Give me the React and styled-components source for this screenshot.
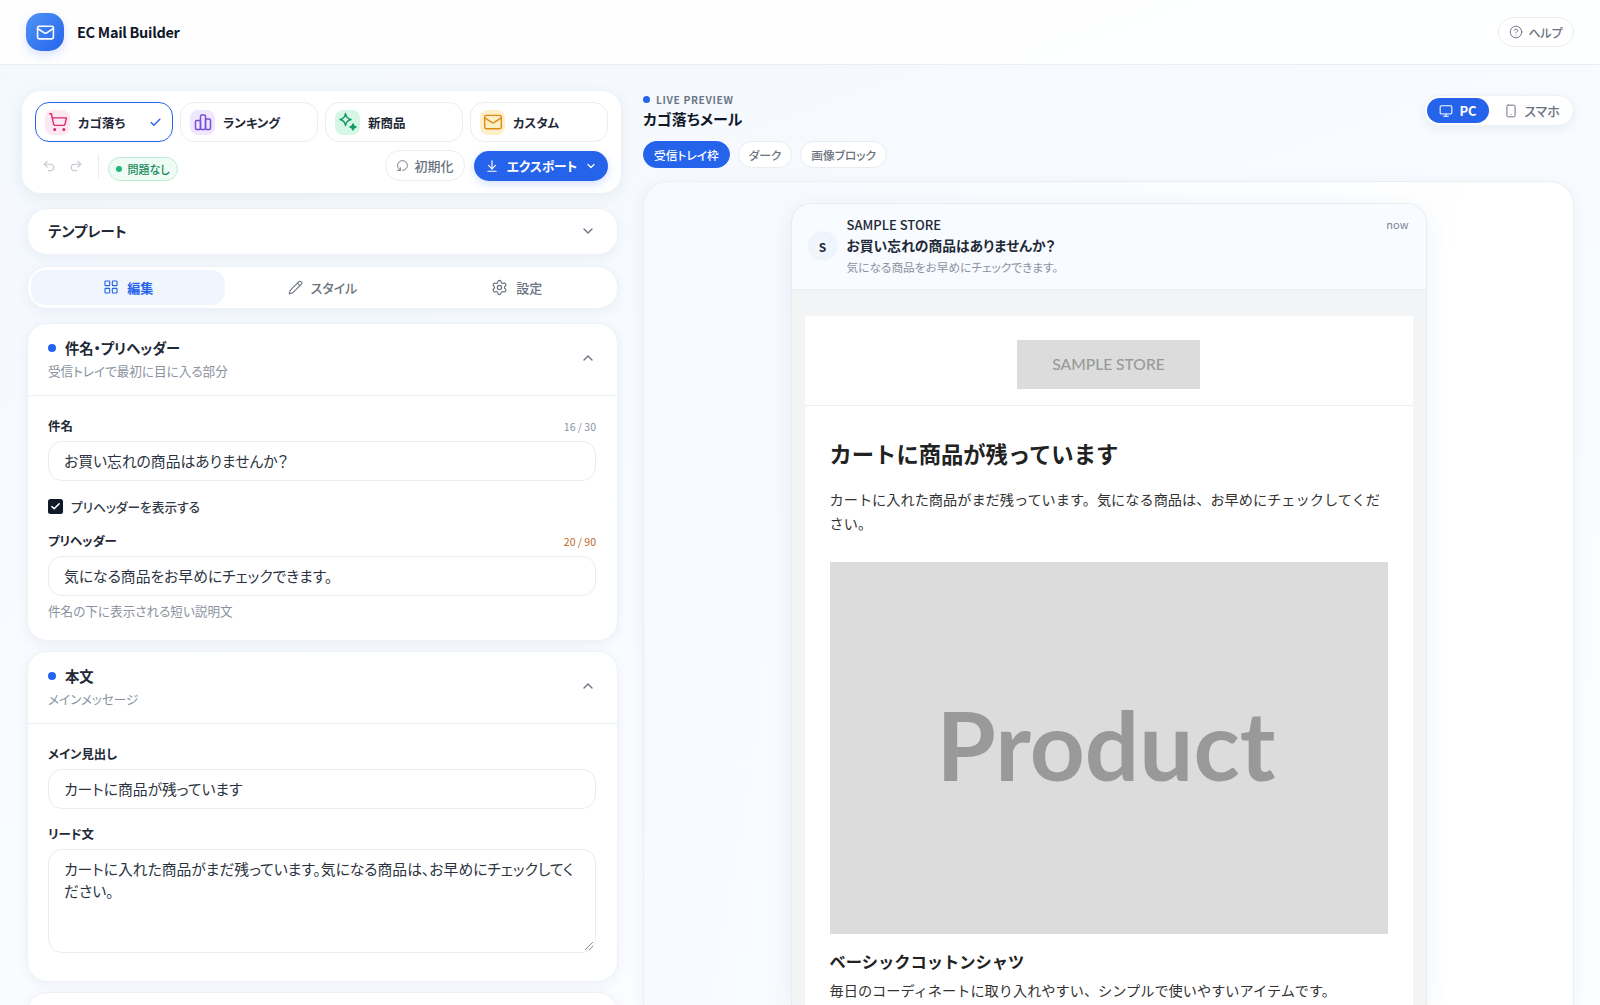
import React from "react";
import styled, { createGlobalStyle } from "styled-components";
import {
  Mail, CircleHelp, ShoppingCart, Check, Undo2, Redo2, RotateCcw, ArrowDownToLine, ChevronDown, ChevronUp,
  LayoutGrid, Pencil, Settings, Monitor, Smartphone,
} from "lucide-react";

const FONT = `"Noto Sans CJK JP", "Noto Sans", sans-serif`;

const Global = createGlobalStyle`
  * { box-sizing: border-box; }
  html, body { margin: 0; padding: 0; height: 100%; overflow: hidden; }
  body {
    font-family: ${FONT};
    font-feature-settings: "palt";
    color: #111827;
    background: linear-gradient(160deg, #f3f8fe 0%, #f8fbff 45%, #fcfdff 100%);
  }
`;

const Page = styled.div`
  height: 1005px;
  overflow: hidden;
  display: flex;
  flex-direction: column;
`;

const Header = styled.header`
  height: 65px;
  flex: none;
  display: flex;
  align-items: center;
  justify-content: space-between;
  padding: 0 26px;
  background: rgba(255, 255, 255, 0.85);
  border-bottom: 1px solid #e9eef4;
`;

const Brand = styled.div`
  display: flex;
  align-items: center;
  gap: 13px;
`;

const LogoMark = styled.div`
  width: 38px;
  height: 38px;
  border-radius: 15px;
  display: flex;
  align-items: center;
  justify-content: center;
  color: #fff;
  background: linear-gradient(135deg, #4f94f6, #2563eb);
  box-shadow: 0 4px 10px rgba(37, 99, 235, 0.18);
`;

const BrandName = styled.div`
  font-size: 14.5px;
  font-weight: 700;
  letter-spacing: -0.3px;
  padding-bottom: 2px;
  color: #111827;
`;

const HelpButton = styled.button`
  width: 76px;
  height: 30px;
  border: 1px solid #e8ecf2;
  border-radius: 15px;
  background: #fff;
  display: flex;
  align-items: center;
  justify-content: center;
  gap: 5px;
  color: #6b7280;
  font: 500 12px ${FONT};
  font-feature-settings: "palt";
  padding: 0;
`;

const Body = styled.main`
  flex: 1;
  min-height: 0;
  display: flex;
  gap: 25px;
  padding: 26px 26px 0 27px;
`;

const LeftCol = styled.section`
  width: 591px;
  flex: none;
  display: flex;
  flex-direction: column;
  gap: 10px;
`;

const Toolbar = styled.div`
  flex: none;
  margin: -1px -4px 4px -6px;
  height: 104px;
  padding: 11px 13px 0 13px;
  background: #fff;
  border: 1px solid #eef1f6;
  border-radius: 20px;
  box-shadow: 0 4px 14px rgba(30, 64, 120, 0.07);
  display: flex;
  flex-direction: column;
  gap: 8px;
`;

const ModeRow = styled.div`
  display: grid;
  grid-template-columns: repeat(4, 1fr);
  gap: 7px;
`;

const ModeButton = styled.div`
  height: 40px;
  border-radius: 14px;
  border: ${(p) => (p.$active ? "1.5px solid #2563eb" : "1px solid #e9edf3")};
  background: #fff;
  display: flex;
  align-items: center;
  padding: 0 9px;
  gap: 8px;
  font-size: 12.5px;
  font-weight: 700;
  color: #1f2937;
`;

const ModeIcon = styled.div`
  width: 25px;
  height: 25px;
  border-radius: 8px;
  flex: none;
  background: ${(p) => p.$bg};
  color: ${(p) => p.$fg};
  display: flex;
  align-items: center;
  justify-content: center;
`;

const ModeCheck = styled.span`
  margin-left: auto;
  margin-right: 1px;
  display: flex;
  color: #2563eb;
`;

const ActionRow = styled.div`
  display: flex;
  align-items: center;
`;

const HistoryButton = styled.span`
  width: 27px;
  display: flex;
  justify-content: center;
  color: #c3c9d3;
`;

const Divider = styled.span`
  width: 1px;
  height: 24px;
  background: #e9edf3;
  margin: 0 9px 0 9px;
`;

const StatusBadge = styled.span`
  height: 24px;
  width: 70px;
  margin-top: 6px;
  border: 1px solid #bdeed5;
  background: #effcf5;
  border-radius: 12px;
  display: inline-flex;
  align-items: center;
  justify-content: center;
  gap: 5px;
  font-size: 11px;
  font-weight: 500;
  color: #14875a;
  &::before {
    content: "";
    width: 6px;
    height: 6px;
    border-radius: 50%;
    background: #22b573;
  }
`;

const ActionSpacer = styled.span`
  flex: 1;
`;

const ResetButton = styled.button`
  width: 80px;
  height: 31px;
  border: 1px solid #e9edf3;
  border-radius: 15px;
  background: #fff;
  color: #6b7280;
  display: flex;
  align-items: center;
  justify-content: center;
  gap: 5px;
  font: 500 13px ${FONT};
  font-feature-settings: "palt";
  padding: 0;
  margin-right: 9px;
`;

const ResetIcon = styled(RotateCcw)`
  transform: rotate(-90deg);
`;

const ExportButton = styled.button`
  width: 134px;
  height: 30px;
  border: 0;
  border-radius: 15px;
  background: #2563eb;
  color: #fff;
  display: flex;
  align-items: center;
  justify-content: center;
  gap: 8px;
  font: 700 12.7px ${FONT};
  font-feature-settings: "palt";
  padding: 0;
  box-shadow: 0 3px 8px rgba(37, 99, 235, 0.2);
`;

const Card = styled.div`
  flex: none;
  background: #fff;
  border: 1px solid #eef1f6;
  border-radius: 20px;
  box-shadow: 0 3px 12px rgba(30, 64, 120, 0.06);
`;

const TemplateCard = styled(Card)`
  height: 47px;
  margin-bottom: 1px;
  display: flex;
  align-items: center;
  justify-content: space-between;
  padding: 0 21px 2px 20px;
  font-size: 14.4px;
  font-weight: 700;
  color: #1f2937;
  svg { color: #6b7280; }
`;

const TabsCard = styled(Card)`
  height: 43px;
  padding: 3px;
  margin-bottom: 4px;
  display: grid;
  grid-template-columns: repeat(3, 1fr);
`;

const Tab = styled.div`
  border-radius: 14px;
  display: flex;
  align-items: center;
  justify-content: center;
  gap: 8px;
  padding-bottom: 1px;
  font-size: 13px;
  font-weight: ${(p) => (p.$active ? 700 : 500)};
  color: ${(p) => (p.$active ? "#2563eb" : "#6b7280")};
  background: ${(p) => (p.$active ? "#f0f6fe" : "transparent")};
`;

const FoldCard = styled(Card)`
  height: ${(p) => p.$h}px;
`;

const SectionHead = styled.div`
  height: 72px;
  padding: 14px 21px 0 20px;
  border-bottom: 1px solid #eef1f6;
  display: flex;
  justify-content: space-between;
  svg { color: #6b7280; margin-top: 12px; }
`;

const SectionTitle = styled.div`
  display: flex;
  align-items: center;
  gap: 9px;
  font-size: 14.3px;
  font-weight: 700;
  line-height: 20px;
  color: #1f2937;
  &::before {
    content: "";
    width: 8px;
    height: 8px;
    border-radius: 50%;
    background: #2563eb;
  }
`;

const SectionSub = styled.div`
  margin-top: 4px;
  font-size: 12.6px;
  line-height: 18px;
  color: #8a92a0;
`;

const SectionBody = styled.div`
  padding: 21px 21px 0 20px;
`;

const LabelRow = styled.div`
  display: flex;
  align-items: center;
  justify-content: space-between;
  height: 18px;
  margin-bottom: 6px;
  margin-top: ${(p) => p.$mt || 0}px;
`;

const Label = styled.label`
  font-size: 12.4px;
  font-weight: 700;
  color: #1f2937;
`;

const Counter = styled.span`
  font-size: 10.5px;
  color: ${(p) => (p.$warn ? "#b9691f" : "#8a92a0")};
`;

const Field = styled.div`
  height: 40px;
  border: 1px solid #e8ecf2;
  border-radius: 14px;
  background: #fff;
  padding: 0 15px 2px;
  display: flex;
  align-items: center;
  font-size: 14.8px;
  color: #2b3340;
`;

const AreaField = styled.div`
  position: relative;
  height: 104px;
  border: 1px solid #e8ecf2;
  border-radius: 14px;
  background: #fff;
  padding: 8px 15px;
  font-size: 14.8px;
  line-height: 21.5px;
  color: #2b3340;
`;

const ResizeGrip = styled.svg`
  position: absolute;
  right: 1px;
  bottom: 1px;
`;

const CheckRow = styled.div`
  display: flex;
  align-items: center;
  gap: 8px;
  margin: 17px 0 17px 0;
  height: 17px;
  font-size: 12.7px;
  font-weight: 500;
  color: #333b48;
`;

const CheckBox = styled.span`
  width: 15px;
  height: 15px;
  border-radius: 2.5px;
  background: #111a2b;
  color: #fff;
  display: flex;
  align-items: center;
  justify-content: center;
`;

const Help = styled.div`
  margin-top: 6px;
  font-size: 12.6px;
  line-height: 18px;
  color: #8a92a0;
`;

const RightCol = styled.section`
  flex: 1;
  min-width: 0;
  display: flex;
  flex-direction: column;
`;

const PreviewHead = styled.div`
  display: flex;
  justify-content: space-between;
  align-items: flex-start;
  height: 90px;
  flex: none;
`;

const Eyebrow = styled.div`
  display: flex;
  align-items: center;
  gap: 6px;
  height: 16px;
  font-size: 10.3px;
  font-weight: 700;
  letter-spacing: 0.06em;
  color: #6b7789;
  &::before {
    content: "";
    width: 7px;
    height: 7px;
    border-radius: 50%;
    background: #2563eb;
  }
`;

const PreviewTitle = styled.div`
  font-size: 15px;
  font-weight: 700;
  line-height: 24px;
  color: #111827;
`;

const PillRow = styled.div`
  display: flex;
  gap: 8px;
  margin-top: 10px;
`;

const Pill = styled.span`
  height: 27px;
  padding: 0 10px;
  border-radius: 14px;
  display: flex;
  align-items: center;
  font-size: 11.7px;
  font-weight: 500;
  background: ${(p) => (p.$active ? "#2563eb" : "#fff")};
  color: ${(p) => (p.$active ? "#fff" : "#6b7280")};
  border: 1px solid ${(p) => (p.$active ? "#2563eb" : "#e8ecf2")};
`;

const DeviceToggle = styled.div`
  margin-top: 4px;
  width: 150px;
  height: 31px;
  padding: 2px;
  background: #fff;
  border: 1px solid #eef1f6;
  border-radius: 16px;
  display: flex;
  box-shadow: 0 3px 10px rgba(30, 64, 120, 0.07);
`;

const DeviceButton = styled.div`
  width: ${(p) => (p.$active ? 63 : 83)}px;
  padding-left: ${(p) => (p.$active ? 0 : 4)}px;
  border-radius: 13px;
  display: flex;
  align-items: center;
  justify-content: center;
  gap: 6px;
  font-size: 13px;
  font-weight: ${(p) => (p.$active ? 700 : 500)};
  background: ${(p) => (p.$active ? "#2563eb" : "transparent")};
  color: ${(p) => (p.$active ? "#fff" : "#6b7280")};
`;

const Frame = styled.div`
  flex: 1;
  min-height: 0;
  display: flex;
  justify-content: center;
  padding: 21px 0 0 0;
  border: 1px solid #eaeff5;
  border-bottom: 0;
  border-radius: 24px 24px 0 0;
  background: linear-gradient(100deg, #f6f9fe 0%, #fbfdff 55%, #ffffff 78%);
  box-shadow: 0 4px 18px rgba(30, 64, 120, 0.05);
  overflow: hidden;
`;

const Phone = styled.div`
  width: 636px;
  border: 1px solid #e8ecf2;
  border-bottom: 0;
  border-radius: 20px 20px 0 0;
  background: #f3f4f6;
  box-shadow: 0 6px 26px rgba(30, 64, 120, 0.07);
  overflow: hidden;
`;

const InboxHead = styled.div`
  height: 86px;
  background: #f8fbff;
  border-bottom: 1px solid #eceff3;
  padding: 11px 17px 0 16px;
  display: flex;
`;

const Avatar = styled.div`
  width: 30px;
  height: 30px;
  border-radius: 50%;
  background: #f0f5fd;
  margin-top: 16px;
  margin-right: 9px;
  flex: none;
  display: flex;
  align-items: center;
  justify-content: center;
  font-size: 12px;
  font-weight: 700;
  color: #1f2937;
`;

const InboxText = styled.div`
  flex: 1;
  min-width: 0;
`;

const InboxFrom = styled.div`
  font-size: 13px;
  font-weight: 500;
  line-height: 20px;
  color: #1f2937;
`;

const InboxSubject = styled.div`
  font-size: 13.8px;
  font-weight: 700;
  line-height: 21px;
  color: #1f2937;
`;

const InboxPre = styled.div`
  font-size: 11.7px;
  line-height: 22px;
  color: #8a92a0;
`;

const InboxTime = styled.span`
  font-size: 11px;
  line-height: 18px;
  color: #7b8494;
`;

const EmailWrap = styled.div`
  padding: 26px 13px 0 13px;
`;

const Email = styled.div`
  background: #fff;
  font-family: Lato, "Noto Sans CJK JP", sans-serif;
  font-feature-settings: normal;
  color: #222;
`;

const EmailLogoRow = styled.div`
  height: 90px;
  border-bottom: 1px solid #eeeeee;
  display: flex;
  justify-content: center;
  padding-top: 24px;
`;

const EmailLogo = styled.div`
  width: 183px;
  height: 49px;
  padding-bottom: 1px;
  background: #dcdcdc;
  color: #999;
  display: flex;
  align-items: center;
  justify-content: center;
  font-size: 15.6px;
  font-weight: 500;
`;

const EmailBody = styled.div`
  padding: 31px 25px 40px 25px;
`;

const EmailHeading = styled.h1`
  margin: 0;
  font-size: 22.3px;
  line-height: 36px;
  font-weight: 700;
  color: #222;
`;

const EmailLead = styled.p`
  margin: 15px 0 0;
  font-size: 14.2px;
  line-height: 24px;
  color: #333;
`;

const ProductImage = styled.div`
  height: 372px;
  margin-top: 26px;
  padding: 0 5px 8px 0;
  background: #dcdcdc;
  color: #999;
  display: flex;
  align-items: center;
  justify-content: center;
  font-size: 96px;
  font-weight: 700;
  line-height: 1;
`;

const ProductName = styled.h2`
  margin: 15px 0 0;
  font-size: 16.25px;
  line-height: 26px;
  font-weight: 700;
  color: #222;
`;

const ProductText = styled.p`
  margin: 3px 0 0;
  font-size: 14.2px;
  line-height: 25px;
  color: #333;
`;

const BarsIcon = () => (
  <svg width="18" height="18" viewBox="0 0 18 18" fill="none" stroke="currentColor" strokeWidth="1.5" strokeLinejoin="round">
    <rect x="1.5" y="7.5" width="5" height="9" rx="1.2" />
    <rect x="6.5" y="2" width="5" height="14.5" rx="1.2" />
    <rect x="11.5" y="6" width="5" height="10.5" rx="1.2" />
  </svg>
);

const StarsIcon = () => (
  <svg width="20" height="20" viewBox="0 0 20 20" fill="none" stroke="currentColor" strokeWidth="1.5" strokeLinejoin="round">
    <path d="M7.5 1.5 C8 5 9.5 6.8 13 7.5 C9.5 8.2 8 10 7.5 13.5 C7 10 5.5 8.2 2 7.5 C5.5 6.8 7 5 7.5 1.5 Z" />
    <path d="M15 12 C15.3 14 16 14.7 18 15 C16 15.3 15.3 16 15 18 C14.7 16 14 15.3 12 15 C14 14.7 14.7 14 15 12 Z" fill="currentColor" />
  </svg>
);

const modes = [
  { name: "カゴ落ち", bg: "#fde8f0", fg: "#db2777", icon: <ShoppingCart size={20} strokeWidth={1.7} />, active: true },
  { name: "ランキング", bg: "#efe7fd", fg: "#7c4ddb", icon: <BarsIcon /> },
  { name: "新商品", bg: "#d6f6e6", fg: "#0f9a66", icon: <StarsIcon /> },
  { name: "カスタム", bg: "#fdf0c8", fg: "#e08a17", icon: <Mail size={20} strokeWidth={1.7} /> },
];

export default function App() {
  return (
    <Page>
      <Global />
      <Header>
        <Brand>
          <LogoMark><Mail size={19} strokeWidth={2} /></LogoMark>
          <BrandName>EC Mail Builder</BrandName>
        </Brand>
        <HelpButton><CircleHelp size={14} strokeWidth={1.6} />ヘルプ</HelpButton>
      </Header>
      <Body>
        <LeftCol>
          <Toolbar>
            <ModeRow>
              {modes.map((m) => (
                <ModeButton key={m.name} $active={m.active}>
                  <ModeIcon $bg={m.bg} $fg={m.fg}>{m.icon}</ModeIcon>
                  {m.name}
                  {m.active && <ModeCheck><Check size={13} strokeWidth={2.6} /></ModeCheck>}
                </ModeButton>
              ))}
            </ModeRow>
            <ActionRow>
              <HistoryButton><Undo2 size={14} /></HistoryButton>
              <HistoryButton><Redo2 size={14} /></HistoryButton>
              <Divider />
              <StatusBadge>問題なし</StatusBadge>
              <ActionSpacer />
              <ResetButton><ResetIcon size={13} strokeWidth={1.7} />初期化</ResetButton>
              <ExportButton><ArrowDownToLine size={14} strokeWidth={2} />エクスポート<ChevronDown size={12} strokeWidth={2.4} /></ExportButton>
            </ActionRow>
          </Toolbar>
          <TemplateCard>テンプレート<ChevronDown size={16} strokeWidth={2} /></TemplateCard>
          <TabsCard>
            <Tab $active><LayoutGrid size={16} strokeWidth={1.7} />編集</Tab>
            <Tab><Pencil size={15} strokeWidth={1.7} />スタイル</Tab>
            <Tab><Settings size={17} strokeWidth={1.7} />設定</Tab>
          </TabsCard>
          <FoldCard $h={318}>
            <SectionHead>
              <div>
                <SectionTitle>件名・プリヘッダー</SectionTitle>
                <SectionSub>受信トレイで最初に目に入る部分</SectionSub>
              </div>
              <ChevronUp size={16} strokeWidth={2} />
            </SectionHead>
            <SectionBody>
              <LabelRow><Label>件名</Label><Counter>16 / 30</Counter></LabelRow>
              <Field>お買い忘れの商品はありませんか？</Field>
              <CheckRow>
                <CheckBox><Check size={11} strokeWidth={3.4} /></CheckBox>
                プリヘッダーを表示する
              </CheckRow>
              <LabelRow><Label>プリヘッダー</Label><Counter $warn>20 / 90</Counter></LabelRow>
              <Field>気になる商品をお早めにチェックできます。</Field>
              <Help>件名の下に表示される短い説明文</Help>
            </SectionBody>
          </FoldCard>
          <FoldCard $h={331}>
            <SectionHead>
              <div>
                <SectionTitle>本文</SectionTitle>
                <SectionSub>メインメッセージ</SectionSub>
              </div>
              <ChevronUp size={16} strokeWidth={2} />
            </SectionHead>
            <SectionBody>
              <LabelRow><Label>メイン見出し</Label></LabelRow>
              <Field>カートに商品が残っています</Field>
              <LabelRow $mt={16}><Label>リード文</Label></LabelRow>
              <AreaField>
                カートに入れた商品がまだ残っています。気になる商品は、お早めにチェックしてください。
                <ResizeGrip width="11" height="11" viewBox="0 0 11 11" stroke="#8a8f98" strokeWidth="1" fill="none">
                  <path d="M2 10 L10 2 M6 10 L10 6" />
                </ResizeGrip>
              </AreaField>
            </SectionBody>
          </FoldCard>
          <FoldCard $h={60} />
        </LeftCol>
        <RightCol>
          <PreviewHead>
            <div>
              <Eyebrow>LIVE PREVIEW</Eyebrow>
              <PreviewTitle>カゴ落ちメール</PreviewTitle>
              <PillRow>
                <Pill $active>受信トレイ枠</Pill>
                <Pill>ダーク</Pill>
                <Pill>画像ブロック</Pill>
              </PillRow>
            </div>
            <DeviceToggle>
              <DeviceButton $active><Monitor size={14} strokeWidth={1.8} />PC</DeviceButton>
              <DeviceButton><Smartphone size={14} strokeWidth={1.7} />スマホ</DeviceButton>
            </DeviceToggle>
          </PreviewHead>
          <Frame>
            <Phone>
              <InboxHead>
                <Avatar>S</Avatar>
                <InboxText>
                  <InboxFrom>SAMPLE STORE</InboxFrom>
                  <InboxSubject>お買い忘れの商品はありませんか？</InboxSubject>
                  <InboxPre>気になる商品をお早めにチェックできます。</InboxPre>
                </InboxText>
                <InboxTime>now</InboxTime>
              </InboxHead>
              <EmailWrap>
                <Email>
                  <EmailLogoRow><EmailLogo>SAMPLE STORE</EmailLogo></EmailLogoRow>
                  <EmailBody>
                    <EmailHeading>カートに商品が残っています</EmailHeading>
                    <EmailLead>カートに入れた商品がまだ残っています。気になる商品は、お早めにチェックしてください。</EmailLead>
                    <ProductImage>Product</ProductImage>
                    <ProductName>ベーシックコットンシャツ</ProductName>
                    <ProductText>毎日のコーディネートに取り入れやすい、シンプルで使いやすいアイテムです。</ProductText>
                  </EmailBody>
                </Email>
              </EmailWrap>
            </Phone>
          </Frame>
        </RightCol>
      </Body>
    </Page>
  );
}
